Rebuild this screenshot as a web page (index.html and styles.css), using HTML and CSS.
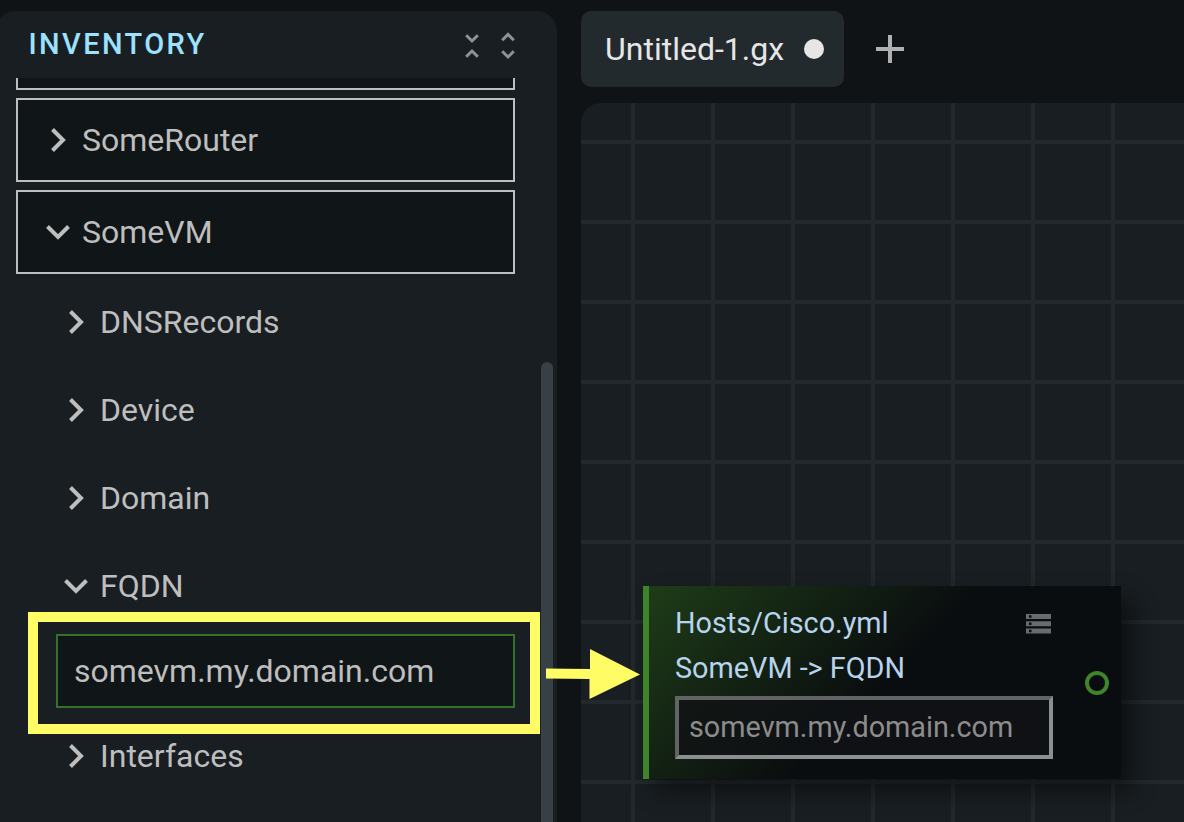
FILE: index.html
```html
<!DOCTYPE html>
<html lang="en">
<head>
<meta charset="utf-8">
<title>Inventory</title>
<link rel="stylesheet" href="styles.css">
</head>
<body>
<div class="app">
  <aside class="sidebar">
    <header class="sidebar-head">
      <h1 class="title">INVENTORY</h1>
      <div class="tools">
        <svg class="tool" viewBox="0 0 14 28"><path d="M1.2 3.2 7 9 12.8 3.2M1.2 24.8 7 19 12.8 24.8"/></svg>
        <svg class="tool" viewBox="0 0 14 28"><path d="M1.2 8.2 7 2.4 12.8 8.2M1.2 19.2 7 25 12.8 19.2"/></svg>
      </div>
    </header>
    <div class="list">
      <div class="host host-cut"></div>
      <div class="host"><svg class="chev" viewBox="0 0 24 24"><path d="M6.5 1.5 17 12 6.5 22.5"/></svg><span>SomeRouter</span></div>
      <div class="host"><svg class="chev" viewBox="0 0 24 24"><path d="M1.5 6.5 12 17 22.5 6.5"/></svg><span>SomeVM</span></div>
      <div class="group"><svg class="chev" viewBox="0 0 24 24"><path d="M6.5 1.5 17 12 6.5 22.5"/></svg><span>DNSRecords</span></div>
      <div class="group"><svg class="chev" viewBox="0 0 24 24"><path d="M6.5 1.5 17 12 6.5 22.5"/></svg><span>Device</span></div>
      <div class="group"><svg class="chev" viewBox="0 0 24 24"><path d="M6.5 1.5 17 12 6.5 22.5"/></svg><span>Domain</span></div>
      <div class="group"><svg class="chev" viewBox="0 0 24 24"><path d="M1.5 6.5 12 17 22.5 6.5"/></svg><span>FQDN</span></div>
      <div class="value">somevm.my.domain.com</div>
      <div class="group"><svg class="chev" viewBox="0 0 24 24"><path d="M6.5 1.5 17 12 6.5 22.5"/></svg><span>Interfaces</span></div>
    </div>
    <div class="scroll-thumb"></div>
  </aside>
  <main class="main">
    <div class="tabs">
      <div class="tab"><span>Untitled-1.gx</span><span class="dirty"></span></div>
      <svg class="add" viewBox="0 0 28 28"><path d="M14 0V28M0 14H28"/></svg>
    </div>
    <div class="canvas">
      <section class="node">
        <div class="node-body">
          <div class="node-file"><span>Hosts/Cisco.yml</span>
            <svg class="server" viewBox="0 0 25 20"><path fill-rule="evenodd" d="M0 0H25V5H0ZM3 1.2H5.5V3.7H3ZM0 7.3H25V12.3H0ZM3 8.5H5.5V11H3ZM0 14.5H25V19.5H0ZM3 15.7H5.5V18.2H3Z"/></svg>
          </div>
          <div class="node-path">SomeVM -&gt; FQDN</div>
          <div class="node-input">somevm.my.domain.com</div>
        </div>
        <span class="port"></span>
      </section>
    </div>
  </main>
  <div class="highlight"></div>
  <svg class="arrow" viewBox="0 0 94 50"><path d="M0 19.5 44 20V0L94 25.5 43.5 50V30L0 29.5Z"/></svg>
</div>
</body>
</html>
```
FILE: styles.css
```css
* { box-sizing: border-box; }
body { margin: 0; background: #0f1315; font-family: Roboto, sans-serif; color: #bebebe; font-size: 32px; }
.app { position: relative; display: flex; gap: 24px; width: 1184px; height: 822px; padding-top: 11px; overflow: hidden; }
.sidebar { position: relative; flex: none; width: 561px; height: 840px; margin-left: -4px; padding-left: 20px; background: #191e22; border-radius: 20px; }
.sidebar-head { display: flex; justify-content: space-between; height: 67px; padding: 15px 42.5px 0 12.5px; }
.title { margin: 0; font-size: 29px; line-height: 36px; font-weight: 500; letter-spacing: 2.4px; color: #9ce2ff; }
.tools { display: flex; gap: 21.5px; padding-top: 5.5px; }
.tool { width: 14px; height: 28px; fill: none; stroke: #8f9293; stroke-width: 3; }
.list { display: flex; flex-direction: column; width: 499px; }
.host { display: flex; align-items: center; gap: 12px; height: 84px; margin-bottom: 8px; padding-left: 28px; border: 2px solid #bebebe; background: #101517; }
.host-cut { height: 12px; border-top: 0; }
.chev { flex: none; width: 24px; height: 24px; fill: none; stroke: #bebebe; stroke-width: 4; }
.group { display: flex; align-items: center; gap: 12px; height: 88px; padding-left: 48px; }
.host + .group { margin-top: -4px; }
.value { height: 74px; margin: 4px 0 4px 40px; padding-left: 16px; border: 2px solid #37702c; background: #101517; line-height: 70px; }
.scroll-thumb { position: absolute; right: 4px; top: 351px; width: 12px; height: 600px; border-radius: 6px; background: #374145; }
.main { flex: 1; min-width: 0; display: flex; flex-direction: column; gap: 16px; }
.tabs { display: flex; align-items: center; gap: 32px; height: 76px; }
.tab { display: flex; align-items: center; justify-content: space-between; width: 263px; height: 76px; padding: 0 20px 0 24px; border-radius: 10px; background: #232a2d; color: #e6e6e6; }
.dirty { width: 20px; height: 20px; border-radius: 50%; background: #e6e6e6; }
.add { width: 28px; height: 28px; stroke: #b0b0b0; stroke-width: 4; }
.canvas { flex: 1; padding: 483px 0 0 62px; border-radius: 20px 0 0 0; background-color: #191e22; background-image: linear-gradient(90deg, #22282b 4px, transparent 4px), linear-gradient(#22282b 4px, transparent 4px); background-size: 80px 80px; background-position: 50px 37px; }
.node { display: flex; align-items: center; justify-content: space-between; width: 478px; height: 193px; padding-right: 12px; border-left: 6px solid #3f832b; background: linear-gradient(135deg, #1e3c18, #0a0d0f 50%); box-shadow: 12px 12px 22px rgba(0,0,0,.45); }
.node-body { width: 404px; height: 193px; padding: 14px 0 0 26px; color: #b8d3ec; font-size: 28.8px; }
.node-file { display: flex; justify-content: space-between; align-items: center; height: 46px; padding-right: 2px; line-height: 46px; }
.node-path { height: 45px; line-height: 45px; }
.server { width: 25px; height: 20px; margin-top: 1px; fill: #696b6c; }
.node-input { width: 378px; height: 63px; margin-top: 5px; padding-left: 10px; border: 4px solid; border-color: #626464 #8c8f90 #8c8f90 #626464; background: rgba(16,19,21,.8); color: #8c8c8c; line-height: 54px; }
.port { width: 24px; height: 24px; border: 4px solid #3f832b; border-radius: 50%; }
.highlight { position: absolute; left: 28px; top: 612px; width: 512px; height: 122px; border: 10px solid #fffc66; }
.arrow { position: absolute; left: 546px; top: 649px; width: 94px; height: 50px; fill: #fffc66; }
```
